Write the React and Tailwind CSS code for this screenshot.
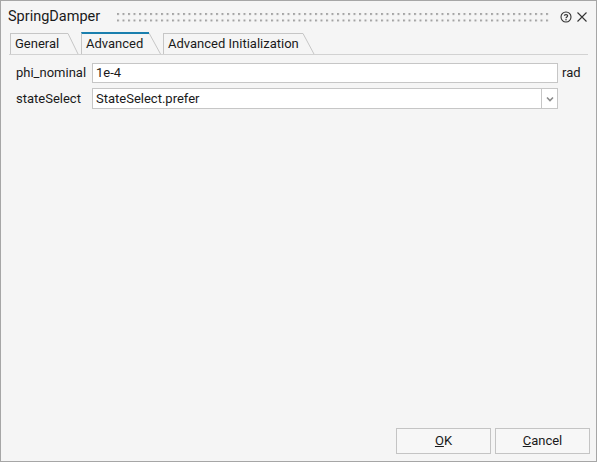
import React from "react";

const font = { fontFamily: 'Roboto, "Liberation Sans", Arial, sans-serif' };

function Tab({ label, width, active, slant = 11 }) {
  return (
    <div className="flex items-stretch h-[22px]">
      <div
        className={
          "border-l border-[#c6c6c6] pl-[4px] flex items-center whitespace-nowrap text-[13px] text-[#1a1a1a] " +
          (active ? "border-t-2 border-t-[#1a7fae] pb-[1px]" : "border-t mt-[1px]")
        }
        style={{ width }}
      >
        {label}
      </div>
      <svg width={slant} height="22" className={active ? "" : "mt-[1px]"}>
        <line x1="0" y1={active ? 1 : 0.5} x2={slant - 0.5} y2="22" stroke="#c6c6c6" strokeWidth="1" />
      </svg>
    </div>
  );
}

export default function App() {
  return (
    <div
      className="w-[597px] h-[462px] border border-[#a6a6a6] bg-[#f5f5f5] flex flex-col text-[#1a1a1a]"
      style={font}
    >
      {/* title bar */}
      <div className="h-[30px] flex items-center pl-[7px] pr-[8px]">
        <div className="text-[14.5px] mt-[2px]">SpringDamper</div>
        <div className="flex-1 ml-[17px] mr-[10px] h-[9px] mt-[2px]">
          <svg width="100%" height="9">
            <defs>
              <pattern id="dots" x="0" y="0" width="5.5" height="6.5" patternUnits="userSpaceOnUse">
                <rect x="0" y="0" width="2" height="2" fill="#a3a3a3" />
              </pattern>
            </defs>
            <rect x="0" y="0" width="100%" height="9" fill="url(#dots)" />
          </svg>
        </div>
        <svg width="12" height="12" viewBox="0 0 12 12" className="mt-[2px]">
          <circle cx="6" cy="6" r="5" fill="none" stroke="#333" strokeWidth="1.1" />
          <path d="M4.3 4.8 C4.3 3.2 7.7 3.2 7.7 4.8 C7.7 6 6 6 6 7.3" fill="none" stroke="#333" strokeWidth="1.1" />
          <circle cx="6" cy="8.8" r="0.75" fill="#333" />
        </svg>
        <svg width="12" height="12" viewBox="0 0 12 12" className="ml-[4px] mt-[2px]">
          <path d="M1.5 1.5 L10.5 10.5 M10.5 1.5 L1.5 10.5" stroke="#333" strokeWidth="1.1" />
        </svg>
      </div>

      {/* tabs */}
      <div className="flex items-end pl-[9px] mt-[1px] gap-[2px]">
        <Tab label="General" width={58} />
        <Tab label="Advanced" width={68} active slant={12} />
        <Tab label="Advanced Initialization" width={140} slant={12} />
      </div>
      <div className="mx-[8px] h-px bg-[#d2d2d2]" />

      {/* content */}
      <div className="flex flex-col gap-[5px] pt-[8px] pl-[15px] pr-[8px] text-[13px]">
        <div className="flex items-center h-[20px]">
          <div className="w-[76px]">phi_nominal</div>
          <div className="w-[466px] h-[20px] bg-white border border-[#c6c6c6] flex items-center pl-[3px]">1e-4</div>
          <div className="ml-[4px]">rad</div>
        </div>
        <div className="flex items-center h-[21px]">
          <div className="w-[76px]">stateSelect</div>
          <div className="w-[466px] h-[21px] bg-white border border-[#c6c6c6] flex items-stretch">
            <div className="flex-1 flex items-center pl-[3px]">StateSelect.prefer</div>
            <div className="w-[16px] border-l border-[#c6c6c6] flex items-center justify-center">
              <svg width="8" height="6" viewBox="0 0 8 6">
                <path d="M1 1.5 L4 4.5 L7 1.5" fill="none" stroke="#8a8a8a" strokeWidth="1.6" />
              </svg>
            </div>
          </div>
        </div>
      </div>

      <div className="flex-1" />

      {/* buttons */}
      <div className="flex justify-end gap-[4px] pr-[6px] pb-[7px] text-[13px]">
        <button className="w-[95px] h-[26px] bg-[#f7f7f7] border border-[#c4c4c4] flex items-center justify-center">
          <span><span className="underline">O</span>K</span>
        </button>
        <button className="w-[95px] h-[26px] bg-[#f7f7f7] border border-[#c4c4c4] flex items-center justify-center">
          <span><span className="underline">C</span>ancel</span>
        </button>
      </div>
    </div>
  );
}
